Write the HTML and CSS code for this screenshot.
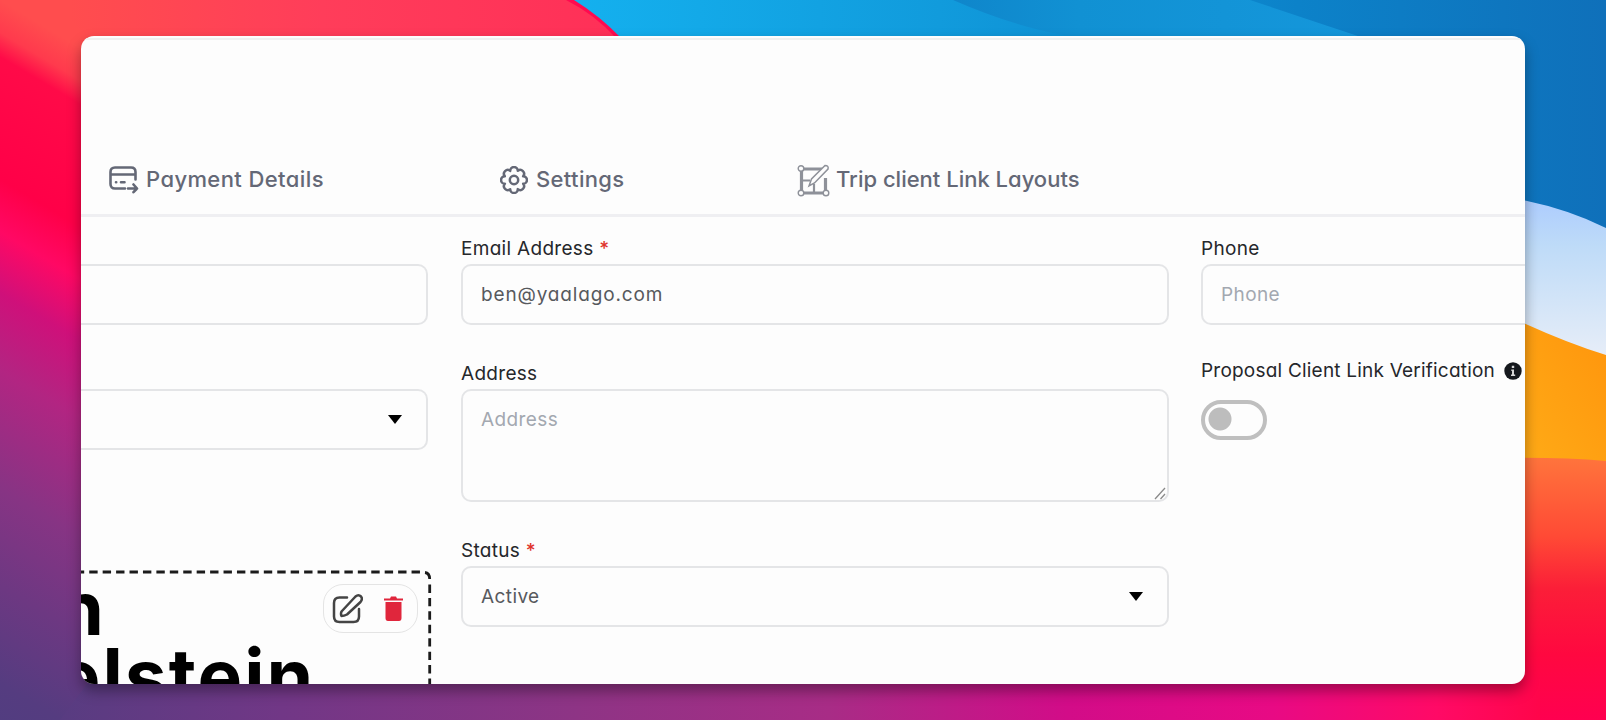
FILE: index.html
```html
<!doctype html>
<html lang="en">
<head>
    <title>Client Details</title>
    <meta charset="utf-8">
    <link rel="stylesheet" href="styles.css">
</head>
<body>
    <!-- wallpaper -->
    <svg class="wallpaper" viewBox="0 0 1606 720" preserveAspectRatio="none">
        <defs>
            <linearGradient id="left" gradientUnits="userSpaceOnUse" x1="0" y1="0" x2="-357" y2="602">
                <stop offset="0" stop-color="#ff4d4e"/>
                <stop offset=".04" stop-color="#ff3a4d"/>
                <stop offset=".07" stop-color="#ff0a48"/>
                <stop offset=".22" stop-color="#ff0048"/>
                <stop offset=".285" stop-color="#ff0864"/>
                <stop offset=".36" stop-color="#cf107a"/>
                <stop offset=".455" stop-color="#b22582"/>
                <stop offset=".6" stop-color="#873484"/>
                <stop offset=".72" stop-color="#6d3882"/>
                <stop offset=".84" stop-color="#553c80"/>
                <stop offset="1" stop-color="#4a3f80"/>
            </linearGradient>
            <linearGradient id="top" x1="0" x2="1" y1="0" y2="0">
                <stop offset="0" stop-color="#ff4d4e"/>
                <stop offset=".4" stop-color="#ff3d5a"/>
                <stop offset="1" stop-color="#ff2c57"/>
            </linearGradient>
            <linearGradient id="blue" gradientUnits="userSpaceOnUse" x1="580" y1="0" x2="1606" y2="0">
                <stop offset="0" stop-color="#14b0ee"/>
                <stop offset=".35" stop-color="#119bdc"/>
                <stop offset=".7" stop-color="#0c82c9"/>
                <stop offset="1" stop-color="#0f70ba"/>
            </linearGradient>
            <linearGradient id="wave" x1="0" x2="1" y1="0" y2="0">
                <stop offset="0" stop-color="#0f86cb"/>
                <stop offset=".3" stop-color="#1191d3"/>
                <stop offset="1" stop-color="#1597db"/>
            </linearGradient>
            <linearGradient id="pale" x1="0" x2="0" y1="0" y2="1">
                <stop offset="0" stop-color="#abcbff"/>
                <stop offset=".3" stop-color="#bedbf8"/>
                <stop offset="1" stop-color="#e8eef8"/>
            </linearGradient>
            <linearGradient id="amber" x1="0" x2="1" y1="1" y2="0">
                <stop offset="0" stop-color="#ffae18"/>
                <stop offset="1" stop-color="#ff940c"/>
            </linearGradient>
            <linearGradient id="coral" x1="0" x2="0" y1="0" y2="1">
                <stop offset="0" stop-color="#ff743c"/>
                <stop offset=".3" stop-color="#ff4a35"/>
                <stop offset=".5" stop-color="#fb1e38"/>
                <stop offset=".75" stop-color="#ff0840"/>
                <stop offset="1" stop-color="#ff0050"/>
            </linearGradient>
            <linearGradient id="bottom" x1="0" x2="1" y1="0" y2="0">
                <stop offset="0" stop-color="#583c81"/>
                <stop offset=".15" stop-color="#713786"/>
                <stop offset=".35" stop-color="#8e3485"/>
                <stop offset=".52" stop-color="#a82c86"/>
                <stop offset=".68" stop-color="#d20c88"/>
                <stop offset=".82" stop-color="#e80a84"/>
                <stop offset=".93" stop-color="#ff0a66"/>
                <stop offset="1" stop-color="#ff054a"/>
            </linearGradient>
        </defs>
        <rect width="1606" height="720" fill="url(#left)"/>
        <path d="M70 0H700V60H110L70 20Z" fill="url(#top)"/>
        <path d="M566 0Q594 14 616 38L640 60H700V0Z" fill="#ff0a50"/>
        <path d="M574 0Q600 16 621 38L640 60V300H1606V0Z" fill="url(#blue)"/>
        <path d="M953 0Q1040 38 1110 40H1370Q1310 20 1250 0Z" fill="url(#wave)"/>
        <path d="M1500 196Q1560 205 1606 228V360H1500Z" fill="url(#pale)"/>
        <path d="M1500 312Q1560 341 1606 355V470H1500Z" fill="url(#amber)"/>
        <path d="M1500 458Q1560 457 1606 461V720H1500Z" fill="url(#coral)"/>
        <path d="M90 680H1540V720H60Z" fill="url(#bottom)"/>
    </svg>

    <div class="window">
        <!-- tabs -->
        <div class="tabs">
            <div class="tab payment">
                <svg width="30" height="28" viewBox="0 0 30 28" fill="none" stroke="currentColor" stroke-width="2.6" stroke-linecap="round" stroke-linejoin="round">
                    <path d="M16 22.500H6Q1.500 22.500 1.500 18V6Q1.500 1.500 6 1.500H22Q26.500 1.500 26.500 6V13.500M1.500 8.500H26.500"/>
                    <path d="M7 16.200H7.200M12 16.200H15.500M19 22.500H28M24.500 18.500L28 22.500L24.500 26.200"/>
                </svg>
                <span>Payment Details</span>
            </div>
            <div class="tab settings">
                <svg width="28" height="28" viewBox="0 0 28 28" fill="none" stroke="currentColor" stroke-width="2.5" stroke-linejoin="round">
                    <path d="M17.800 4.850A3.800 3.800 0 0 1 23.150 10.200A3.800 3.800 0 0 1 23.150 17.800A3.800 3.800 0 0 1 17.800 23.150A3.800 3.800 0 0 1 10.200 23.150A3.800 3.800 0 0 1 4.850 17.800A3.800 3.800 0 0 1 4.850 10.200A3.800 3.800 0 0 1 10.200 4.850A3.800 3.800 0 0 1 17.800 4.850Z"/>
                    <circle cx="14" cy="14" r="4.200"/>
                </svg>
                <span>Settings</span>
            </div>
            <div class="tab layouts">
                <svg width="33" height="33" viewBox="0 0 33 33" fill="none" stroke="currentColor">
                    <path d="M5 5H25M4.500 5V29H28.500V14" stroke-width="3.200"/>
                    <path d="M5 16.500H13M17 20V29" stroke-width="2.200"/>
                    <path d="M12 22L14.500 15L28 1.500Q32 1.500 31 5L17.500 19Z" fill="#fdfdfd" stroke-width="1.500"/>
                    <g fill="#fdfdfd" stroke-width="1.400">
                        <circle cx="4" cy="4.500" r="2.800"/>
                        <circle cx="4" cy="29" r="2.800"/>
                        <circle cx="29" cy="29" r="2.800"/>
                    </g>
                </svg>
                <span>Trip client Link Layouts</span>
            </div>
        </div>

        <!-- form -->
        <div class="form">
            <div class="column first">
                <div class="control cut-left"></div>
                <div class="control cut-left select"><i class="caret"></i></div>
                <div class="logo">
                    <svg class="dashes" width="351" height="120" viewBox="0 0 351 120" fill="none" stroke="#1b1b1b" stroke-width="2.800">
                        <path d="M-5.200 2H340" stroke-dasharray="8.400 5.030"/>
                        <path d="M344 2.500Q348.500 3 348.700 9"/>
                        <path d="M348.700 14.500V120" stroke-dasharray="8.400 5.030"/>
                    </svg>
                    <div class="logo-text">Ben<br>Edelstein</div>
                    <div class="actions">
                        <svg width="31" height="31" viewBox="0 0 31 31" fill="none" stroke="#444" stroke-width="2.500" stroke-linecap="round" stroke-linejoin="round">
                            <path d="M15 4.500H7.500Q2 4.500 2 10V23.500Q2 29 7.500 29H21.500Q27 29 27 23.500V16"/>
                            <path d="M9.500 18.500L23.500 3.500Q26.500 1 29 3.500Q31 6 28.500 9L15 21.500Q12 23 9.500 23Q8.500 21 9.500 18.500Z"/>
                        </svg>
                        <svg width="19" height="25" viewBox="0 0 19 25" fill="#e0263c">
                            <path d="M0 2.500H6L7 .5H12L13 2.500H19V4.500H0ZM1.500 6H17.500V22Q17.500 25 15 25H4Q1.500 25 1.500 22Z"/>
                        </svg>
                    </div>
                </div>
            </div>

            <div class="column second">
                <label>Email Address <b>*</b></label>
                <div class="control value email">ben@yaalago.com</div>
                <label>Address</label>
                <div class="control area">Address
                    <svg class="grip" width="12" height="13" viewBox="0 0 12 13" stroke="#8a8a8a" stroke-width="1.300">
                        <path d="M1 12L11 1M6.500 12L11 7"/>
                    </svg>
                </div>
                <label>Status <b>*</b></label>
                <div class="control value select">Active<i class="caret"></i></div>
            </div>

            <div class="column third">
                <label>Phone</label>
                <div class="control cut-right">Phone</div>
                <div class="verify">
                    <label>Proposal Client Link Verification</label>
                    <svg width="18" height="18" viewBox="0 0 18 18">
                        <circle cx="9" cy="9" r="8.700" fill="#15181d"/>
                        <path d="M7.300 7.500H10V12.500H11.200V14H7V12.500H8V9H7.300ZM7.800 3.800H10.200V6H7.800Z" fill="#d6d6d6"/>
                    </svg>
                </div>
                <div class="toggle"></div>
            </div>
        </div>
    </div>
</body>
</html>
```

FILE: styles.css
```css
* {
    box-sizing: border-box;
}

body {
    margin: 0;
    height: 720px;
    padding: 36px 81px;
    overflow: hidden;
    background: #ff0748;
    font-family: Inter, "Open Sans", sans-serif;
    font-feature-settings: "cv11";
}

svg {
    display: block;
    flex: none;
}

.wallpaper {
    position: absolute;
    top: 0;
    left: 0;
    width: 1606px;
    height: 720px;
}

.window {
    position: relative;
    width: 1444px;
    height: 648px;
    overflow: hidden;
    background: #fdfdfd;
    border-radius: 13px;
    box-shadow: 0 7px 14px rgba(0, 0, 0, 0.35);
}

/* tabs */
.tabs {
    display: flex;
    height: 179px;
    margin-top: 2px;
    border-top: 2px solid #f0f0f0;
    border-bottom: 3px solid #efeff2;
    padding: 123px 0 0 28px;
}

.tab {
    display: flex;
    align-items: center;
    gap: 7px;
    height: 34px;
    color: #646876;
    font-size: 22px;
    font-weight: 500;
    white-space: nowrap;
}

.tab span {
    margin-top: -2px;
}

.payment {
    width: 391px;
    letter-spacing: 0.4px;
}

.settings {
    gap: 8px;
    width: 297px;
    letter-spacing: 0.35px;
}

.layouts {
    gap: 6px;
}

.layouts svg {
    color: #8e9199;
}

/* form */
.form {
    display: grid;
    grid-template-columns: 347px 708px 324px;
    column-gap: 33px;
}

.column {
    padding-top: 19px;
}

label {
    display: block;
    height: 28px;
    line-height: 26px;
    font-size: 19px;
    letter-spacing: 0.3px;
    color: #25272b;
    white-space: nowrap;
}

label b {
    color: #e0342c;
    font-weight: 500;
}

.control {
    position: relative;
    height: 61px;
    border: 2px solid #e4e5e7;
    border-radius: 10px;
    padding: 0 18px;
    line-height: 57px;
    font-size: 19px;
    letter-spacing: 0.4px;
    color: #a3a8b0;
}

.value {
    color: #57595d;
}

.email {
    letter-spacing: 0.85px;
}

.cut-left {
    border-left: none;
    border-radius: 0 10px 10px 0;
}

.cut-right {
    border-right: none;
    border-radius: 10px 0 0 10px;
}

.select {
    display: flex;
    align-items: center;
    justify-content: space-between;
}

.caret {
    width: 14px;
    height: 9px;
    margin: 0 6px 0 auto;
    background: #000;
    clip-path: polygon(0 0, 100% 0, 50% 100%);
}

.area {
    height: 113px;
}

.grip {
    position: absolute;
    right: 1px;
    bottom: 0;
}

.first {
    padding-top: 47px;
}

.first .select {
    margin-top: 64px;
}

.second .control {
    margin-bottom: 36px;
}

.third {
    margin-left: -1px;
}

.logo {
    display: grid;
    width: 351px;
    margin-top: 120px;
}

.logo > * {
    grid-area: 1 / 1;
}

.logo-text {
    margin: 4px 0 0 -122px;
    line-height: 68px;
    font-size: 75px;
    font-weight: 700;
    letter-spacing: 2px;
    color: #000;
}

.actions {
    display: flex;
    align-items: center;
    justify-self: end;
    gap: 21px;
    width: 95px;
    height: 49px;
    margin: 14px 14px 0 0;
    padding-left: 8px;
    border: 1px solid #e4e4e4;
    border-radius: 20px;
}

.verify {
    display: flex;
    align-items: center;
    gap: 9px;
    margin-top: 33px;
}

.verify svg {
    margin-top: -3px;
}

.verify label {
    letter-spacing: 0.21px;
}

.toggle {
    width: 66px;
    height: 40px;
    margin-top: 14px;
    border: 4px solid #bfbfbf;
    border-radius: 20px;
    background: radial-gradient(circle at 15px 15px, #bdbdbd 11px, transparent 12px);
}
```
